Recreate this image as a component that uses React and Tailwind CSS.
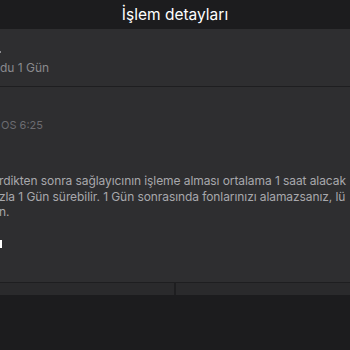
export default function App() {
  return (
    <div className="w-[350px] h-[350px] overflow-hidden bg-[#1c1c1e] flex flex-col" style={{ fontFamily: 'Inter, "Noto Sans", sans-serif' }}>
      <div className="h-[29px] shrink-0 flex items-center justify-center bg-[#1c1c1e]">
        <span className="text-[15.5px] text-white leading-none">İşlem detayları</span>
      </div>
      <div className="bg-[#2e2e30] flex flex-col">
        <div className="h-[57px] flex flex-col overflow-hidden">
          <div className="h-[24px] flex items-end">
            <span className="w-[1px] h-[2px] bg-[#8a8a8e]"></span>
          </div>
          <div className="mt-[8px] text-[12px] leading-[14px] text-[#8a8a8e] whitespace-nowrap">du 1 Gün</div>
        </div>
        <div className="h-[1px] bg-[#1e1e20]"></div>
        <div className="h-[195px] flex flex-col overflow-hidden">
          <div className="ml-[1px] mt-[32px] text-[11px] leading-[13px] text-[#6c6c70] whitespace-nowrap">OS 6:25</div>
          <div className="mt-[41px] text-[12px] leading-[15.5px] tracking-[-0.08px] text-[#a8a8ac] whitespace-nowrap">
            <div className="ml-[-1px]">rdikten sonra sağlayıcının işleme alması ortalama 1 saat alacak</div>
            <div className="ml-[-1px]">zla 1 Gün sürebilir. 1 Gün sonrasında fonlarınızı alamazsanız, lü</div>
            <div className="ml-[-1px]">n.</div>
          </div>
          <div className="mt-[20px] w-[2px] h-[8px] bg-white"></div>
        </div>
        <div className="h-[1px] bg-[#1e1e20]"></div>
      </div>
      <div className="h-[12px] bg-[#2a2a2c] flex">
        <div className="flex-1"></div>
        <div className="w-[2px] bg-[#1e1e20]"></div>
        <div className="flex-1"></div>
      </div>
      <div className="flex-1 bg-[#1c1c1e]"></div>
    </div>
  );
}
